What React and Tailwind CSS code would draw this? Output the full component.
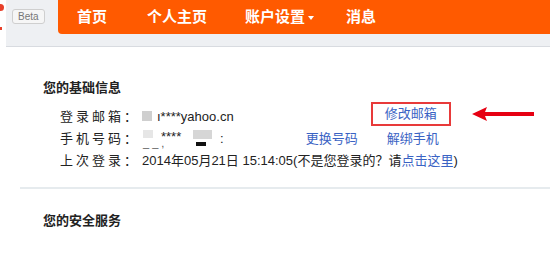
import React from "react";

const cjk = { fontFamily: '"Liberation Sans", "Noto Sans CJK SC", sans-serif' };

function Arrow() {
  return (
    <svg width="64" height="14" viewBox="0 0 64 14" aria-hidden="true">
      <path d="M0 7 L15 0 L13 5 L62 5 L62 9 L13 9 L15 14 Z" fill="#e60012" />
    </svg>
  );
}

export default function App() {
  return (
    <div className="w-[550px] h-[270px] bg-white text-[#222] overflow-hidden" style={cjk}>
      {/* top bar */}
      <div className="relative ml-[6px] h-[47px] bg-[#eef0f3] border-b border-[#d8dbe0] flex">
        <div className="absolute -left-[6px] top-[4px] w-[4px] h-[7px] bg-[#e8402a] rounded-r" />
        <div className="absolute -left-[6px] top-[27px] w-[2px] h-[3px] bg-[#e8402a]" />
        <div className="w-[52px] pl-[6px] pt-[3px]">
          <span className="inline-block px-[5px] h-[15px] leading-[14px] text-[10px] text-[#777] bg-[#f6f6f6] border border-[#cfcfcf] rounded-[3px]">
            Beta
          </span>
        </div>
        <nav className="flex-1 h-[34px] bg-[#ff5a00] rounded-bl-[4px] flex items-center pl-[19px] text-white text-[15px] font-bold">
          <span className="w-[70px]">首页</span>
          <span className="w-[98px]">个人主页</span>
          <span className="w-[101px] flex items-center gap-[3px]">
            账户设置
            <span className="inline-block border-x-[3px] border-t-[4px] border-x-transparent border-t-white mt-[2px]" />
          </span>
          <span>消息</span>
        </nav>
      </div>

      {/* basic info */}
      <div className="pl-[43px] pt-[33px]">
        <div className="text-[13px] font-bold leading-[16px]">您的基础信息</div>
        <div className="pl-[17px] pt-[9px] text-[13px] leading-[21px]">
          <div className="flex items-center h-[22px]">
            <span className="w-[82px] tracking-[3px]">登录邮箱：</span>
            <span className="w-[10px] h-[10px] bg-[#cfcfcf]" />
            <span className="ml-[5px]">ı****yahoo.cn</span>
            <span className="ml-[137px] -mt-[5px] border-2 border-[#e83a3a] px-[12px] h-[24px] leading-[20px] text-[#3a63c4]">
              修改邮箱
            </span>
            <span className="ml-[21px] -mt-[4px] flex">
              <Arrow />
            </span>
          </div>
          <div className="flex items-center h-[22px]">
            <span className="w-[82px] tracking-[3px]">手机号码：</span>
            <span className="relative w-[78px] h-[22px]">
              <span className="absolute left-[1px] top-[3px] w-[10px] h-[8px] bg-[#e6e6e6]" />
              <span className="absolute left-[1px] top-[6px] text-[11px] text-[#555]">_ _ ,</span>
              <span className="absolute left-[19px] top-[-1px] text-[13px]">****</span>
              <span className="absolute left-[51px] top-[3px] w-[19px] h-[9px] bg-[#d6d6d6]" />
              <span className="absolute left-[54px] top-[15px] w-[10px] h-[4px] bg-[#111]" />
            </span>
            <span>:</span>
            <span className="ml-[82px] text-[#3a63c4]">更换号码</span>
            <span className="ml-[29px] text-[#3a63c4]">解绑手机</span>
          </div>
          <div className="flex items-center h-[22px]">
            <span className="w-[82px] tracking-[3px]">上次登录：</span>
            <span>
              2014年05月21日 15:14:05(不是您登录的？请<span className="text-[#3a63c4]">点击这里</span>)
            </span>
          </div>
        </div>
      </div>

      <div className="ml-[20px] mt-[16px] border-t-2 border-[#e6ebee]" />

      <div className="pl-[43px] pt-[22px] text-[13px] font-bold">您的安全服务</div>
    </div>
  );
}
